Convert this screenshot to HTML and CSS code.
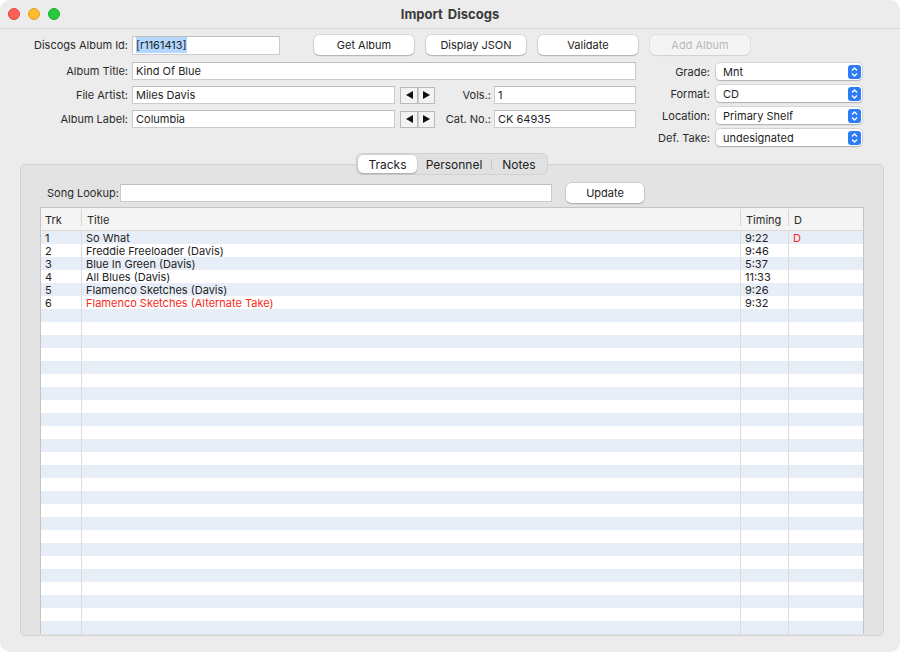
FILE: index.html
```html
<html>
<head>
  <link rel="stylesheet" href="styles.css">
</head>
<body>
<div class="window">
  <div class="titlebar">
    <div class="lights">
      <span class="light light-red"></span>
      <span class="light light-yellow"></span>
      <span class="light light-green"></span>
    </div>
    <div class="title">Import Discogs</div>
    <div></div>
  </div>

  <div class="content">
    <div class="row-id">
      <div class="lbl lbl-main">Discogs Album Id:</div>
      <div class="field field-id"><span class="sel">[r1161413]</span></div>
      <div class="buttons">
        <div class="btn">Get Album</div>
        <div class="btn">Display JSON</div>
        <div class="btn">Validate</div>
        <div class="btn btn-disabled">Add Album</div>
      </div>
    </div>

    <div class="fields">
      <div class="left-form">
        <div class="frow">
          <div class="lbl lbl-main">Album Title:</div>
          <div class="field field-title">Kind Of Blue</div>
        </div>
        <div class="frow">
          <div class="lbl lbl-main">File Artist:</div>
          <div class="field field-artist">Miles Davis</div>
          <div class="arrows">
            <div class="arr"><svg width="7" height="8" viewBox="0 0 7 8"><polygon points="7,0 7,8 0,4" fill="#111"/></svg></div>
            <div class="arr"><svg width="7" height="8" viewBox="0 0 7 8"><polygon points="0,0 0,8 7,4" fill="#111"/></svg></div>
          </div>
          <div class="lbl lbl-mid">Vols.:</div>
          <div class="field field-small">1</div>
        </div>
        <div class="frow">
          <div class="lbl lbl-main">Album Label:</div>
          <div class="field field-artist">Columbia</div>
          <div class="arrows">
            <div class="arr"><svg width="7" height="8" viewBox="0 0 7 8"><polygon points="7,0 7,8 0,4" fill="#111"/></svg></div>
            <div class="arr"><svg width="7" height="8" viewBox="0 0 7 8"><polygon points="0,0 0,8 7,4" fill="#111"/></svg></div>
          </div>
          <div class="lbl lbl-mid">Cat. No.:</div>
          <div class="field field-small">CK 64935</div>
        </div>
      </div>

      <div class="right-form">
        <div class="prow">
          <div class="lbl lbl-right">Grade:</div>
          <div class="popup"><span>Mnt</span>
            <svg class="stepper" width="13" height="14" viewBox="0 0 13 14"><rect width="13" height="14" rx="3" fill="#2d7cf6"/><polyline points="4,5.5 6.5,3 9,5.5" fill="none" stroke="#fff" stroke-width="1.3"/><polyline points="4,8.5 6.5,11 9,8.5" fill="none" stroke="#fff" stroke-width="1.3"/></svg>
          </div>
        </div>
        <div class="prow">
          <div class="lbl lbl-right">Format:</div>
          <div class="popup"><span>CD</span>
            <svg class="stepper" width="13" height="14" viewBox="0 0 13 14"><rect width="13" height="14" rx="3" fill="#2d7cf6"/><polyline points="4,5.5 6.5,3 9,5.5" fill="none" stroke="#fff" stroke-width="1.3"/><polyline points="4,8.5 6.5,11 9,8.5" fill="none" stroke="#fff" stroke-width="1.3"/></svg>
          </div>
        </div>
        <div class="prow">
          <div class="lbl lbl-right">Location:</div>
          <div class="popup"><span>Primary Shelf</span>
            <svg class="stepper" width="13" height="14" viewBox="0 0 13 14"><rect width="13" height="14" rx="3" fill="#2d7cf6"/><polyline points="4,5.5 6.5,3 9,5.5" fill="none" stroke="#fff" stroke-width="1.3"/><polyline points="4,8.5 6.5,11 9,8.5" fill="none" stroke="#fff" stroke-width="1.3"/></svg>
          </div>
        </div>
        <div class="prow">
          <div class="lbl lbl-right">Def. Take:</div>
          <div class="popup"><span>undesignated</span>
            <svg class="stepper" width="13" height="14" viewBox="0 0 13 14"><rect width="13" height="14" rx="3" fill="#2d7cf6"/><polyline points="4,5.5 6.5,3 9,5.5" fill="none" stroke="#fff" stroke-width="1.3"/><polyline points="4,8.5 6.5,11 9,8.5" fill="none" stroke="#fff" stroke-width="1.3"/></svg>
          </div>
        </div>
      </div>
    </div>

    <div class="tabbox">
      <div class="tabs">
        <div class="tab tab-tracks tab-active">Tracks</div>
        <div class="tab tab-personnel">Personnel</div>
        <div class="tab-sep"></div>
        <div class="tab tab-notes">Notes</div>
      </div>

      <div class="lookup">
        <div class="lbl lbl-lookup">Song Lookup:</div>
        <div class="field field-lookup"></div>
        <div class="btn btn-update">Update</div>
      </div>

      <div class="table">
        <div class="thead">
          <div class="th">Trk</div>
          <div class="th">Title</div>
          <div class="th">Timing</div>
          <div class="th">D</div>
        </div>
        <div class="tbody">
          <div class="tr"><div class="td">1</div><div class="td">So What</div><div class="td">9:22</div><div class="td txt-red">D</div></div>
          <div class="tr"><div class="td">2</div><div class="td">Freddie Freeloader (Davis)</div><div class="td">9:46</div><div class="td"></div></div>
          <div class="tr"><div class="td">3</div><div class="td">Blue In Green (Davis)</div><div class="td">5:37</div><div class="td"></div></div>
          <div class="tr"><div class="td">4</div><div class="td">All Blues (Davis)</div><div class="td">11:33</div><div class="td"></div></div>
          <div class="tr"><div class="td">5</div><div class="td">Flamenco Sketches (Davis)</div><div class="td">9:26</div><div class="td"></div></div>
          <div class="tr"><div class="td">6</div><div class="td txt-red">Flamenco Sketches (Alternate Take)</div><div class="td">9:32</div><div class="td"></div></div>
          <div class="tr"><div class="td"></div><div class="td"></div><div class="td"></div><div class="td"></div></div>
          <div class="tr"><div class="td"></div><div class="td"></div><div class="td"></div><div class="td"></div></div>
          <div class="tr"><div class="td"></div><div class="td"></div><div class="td"></div><div class="td"></div></div>
          <div class="tr"><div class="td"></div><div class="td"></div><div class="td"></div><div class="td"></div></div>
          <div class="tr"><div class="td"></div><div class="td"></div><div class="td"></div><div class="td"></div></div>
          <div class="tr"><div class="td"></div><div class="td"></div><div class="td"></div><div class="td"></div></div>
          <div class="tr"><div class="td"></div><div class="td"></div><div class="td"></div><div class="td"></div></div>
          <div class="tr"><div class="td"></div><div class="td"></div><div class="td"></div><div class="td"></div></div>
          <div class="tr"><div class="td"></div><div class="td"></div><div class="td"></div><div class="td"></div></div>
          <div class="tr"><div class="td"></div><div class="td"></div><div class="td"></div><div class="td"></div></div>
          <div class="tr"><div class="td"></div><div class="td"></div><div class="td"></div><div class="td"></div></div>
          <div class="tr"><div class="td"></div><div class="td"></div><div class="td"></div><div class="td"></div></div>
          <div class="tr"><div class="td"></div><div class="td"></div><div class="td"></div><div class="td"></div></div>
          <div class="tr"><div class="td"></div><div class="td"></div><div class="td"></div><div class="td"></div></div>
          <div class="tr"><div class="td"></div><div class="td"></div><div class="td"></div><div class="td"></div></div>
          <div class="tr"><div class="td"></div><div class="td"></div><div class="td"></div><div class="td"></div></div>
          <div class="tr"><div class="td"></div><div class="td"></div><div class="td"></div><div class="td"></div></div>
          <div class="tr"><div class="td"></div><div class="td"></div><div class="td"></div><div class="td"></div></div>
          <div class="tr"><div class="td"></div><div class="td"></div><div class="td"></div><div class="td"></div></div>
          <div class="tr"><div class="td"></div><div class="td"></div><div class="td"></div><div class="td"></div></div>
          <div class="tr"><div class="td"></div><div class="td"></div><div class="td"></div><div class="td"></div></div>
          <div class="tr"><div class="td"></div><div class="td"></div><div class="td"></div><div class="td"></div></div>
          <div class="tr"><div class="td"></div><div class="td"></div><div class="td"></div><div class="td"></div></div>
          <div class="tr"><div class="td"></div><div class="td"></div><div class="td"></div><div class="td"></div></div>
          <div class="tr"><div class="td"></div><div class="td"></div><div class="td"></div><div class="td"></div></div>
        </div>
      </div>
    </div>
  </div>
</div>
</body>
</html>
```

FILE: styles.css
```css
body {
  margin: 0;
  padding: 0;
  background: #fff;
  font-family: Inter, "Noto Sans", sans-serif;
  font-size: 11px;
  color: #262626;
}

.window {
  width: 900px;
  height: 652px;
  background: #ececec;
  border-radius: 10px;
  overflow: hidden;
  display: flex;
  flex-direction: column;
}

/* title bar */

.titlebar {
  height: 28px;
  flex: none;
  border-bottom: 1px solid #d8d8d8;
  display: grid;
  grid-template-columns: 1fr auto 1fr;
  align-items: center;
}

.lights {
  display: flex;
  gap: 8px;
  padding-left: 8px;
}

.light {
  width: 12px;
  height: 12px;
  border-radius: 50%;
  box-sizing: border-box;
}

.light-red { background: #fe5f57; border: 0.5px solid #e2463f; }
.light-yellow { background: #febc2e; border: 0.5px solid #dfa023; }
.light-green { background: #28c840; border: 0.5px solid #1dad2b; }

.title {
  font-size: 13px;
  font-weight: 700;
  color: #3a3a3a;
  word-spacing: 2px;
}

/* form */

.content {
  flex: 1;
  display: flex;
  flex-direction: column;
  padding: 6px 16px 16px 20px;
  min-height: 0;
}

.lbl {
  color: #2b2b2b;
  white-space: nowrap;
}

.lbl-main {
  width: 108px;
  margin-right: 4px;
  text-align: right;
}

.lbl-mid {
  width: 56px;
  margin-right: 3px;
  text-align: right;
}

.lbl-right {
  width: 66px;
  margin-right: 6px;
  text-align: right;
}

.field {
  box-sizing: border-box;
  background: #fff;
  border: 1px solid #cbcbcb;
  border-top-color: #bfbfbf;
  height: 18px;
  padding: 0 3px;
  display: flex;
  align-items: center;
  color: #1e1e1e;
}

.row-id {
  display: flex;
  align-items: center;
  height: 20px;
}

.field-id {
  width: 148px;
  height: 19px;
}

.sel {
  background: #b3d7ff;
  padding: 1px 0;
}

.buttons {
  display: flex;
  gap: 12px;
  margin-left: 34px;
}

.btn {
  box-sizing: border-box;
  width: 100px;
  height: 20px;
  background: #fff;
  border-radius: 5px;
  box-shadow: 0 0 0 0.5px rgba(0,0,0,0.18), 0 1px 1.5px rgba(0,0,0,0.18);
  display: flex;
  align-items: center;
  justify-content: center;
  color: #222;
}

.btn-disabled {
  background: #f4f4f4;
  color: #b9b9b9;
  box-shadow: 0 0 0 0.5px rgba(0,0,0,0.08), 0 0.5px 1px rgba(0,0,0,0.08);
}

.fields {
  display: flex;
  margin-top: 7px;
}

.left-form {
  width: 616px;
  display: flex;
  flex-direction: column;
  gap: 6px;
}

.frow {
  display: flex;
  align-items: center;
  height: 18px;
}

.field-title { width: 504px; }
.field-artist { width: 263px; }
.field-small { width: 142px; }

.arrows {
  display: flex;
  margin-left: 5px;
  height: 17px;
}

.arr {
  box-sizing: border-box;
  width: 18px;
  height: 17px;
  background: #f3f3f3;
  border: 1px solid #b9b9b9;
  display: flex;
  align-items: center;
  justify-content: center;
}

.arr + .arr {
  width: 17px;
  border-left: 1px solid #c9c9c9;
}

.right-form {
  margin-left: 8px;
  margin-top: 1px;
  display: flex;
  flex-direction: column;
  gap: 5px;
}

.prow {
  display: flex;
  align-items: center;
  height: 17px;
}

.popup {
  box-sizing: border-box;
  width: 146px;
  height: 17px;
  background: #fff;
  border-radius: 4px;
  box-shadow: 0 0 0 0.5px rgba(0,0,0,0.2), 0 1px 1.5px rgba(0,0,0,0.18);
  display: flex;
  align-items: center;
  justify-content: space-between;
  padding: 0 1px 0 7px;
  color: #1e1e1e;
}

.stepper {
  display: block;
}

/* tab box */

.tabbox {
  flex: 1;
  min-height: 0;
  margin-top: 18px;
  background: #e3e3e3;
  border: 1px solid #d3d3d3;
  border-radius: 5px;
  display: flex;
  flex-direction: column;
  padding: 0 19px 1px;
}

.tabs {
  align-self: center;
  margin-top: -12px;
  box-sizing: border-box;
  height: 22px;
  display: flex;
  align-items: center;
  padding: 1px;
  background: #e1e1e1;
  border: 1px solid #d1d1d1;
  border-radius: 6px;
  font-size: 12px;
  color: #222;
}

.tab {
  height: 18px;
  display: flex;
  align-items: center;
  justify-content: center;
}

.tab-tracks { width: 59px; }
.tab-personnel { width: 74px; }
.tab-notes { width: 54px; }

.tab-active {
  background: #fff;
  border-radius: 5px;
  box-shadow: 0 0 0 0.5px rgba(0,0,0,0.12), 0 1px 1.5px rgba(0,0,0,0.2);
}

.tab-sep {
  width: 1px;
  height: 11px;
  background: #c6c6c6;
}

.lookup {
  display: flex;
  align-items: center;
  height: 20px;
  margin-top: 8px;
}

.lbl-lookup {
  width: 71px;
  margin-left: 7px;
  margin-right: 2px;
  text-align: right;
}

.field-lookup {
  width: 432px;
  height: 18px;
}

.btn-update {
  width: 78px;
  margin-left: 14px;
}

/* table */

.table {
  flex: 1;
  min-height: 0;
  margin-top: 4px;
  background: #fff;
  border: 1px solid #c4c4c4;
  border-bottom: none;
  display: flex;
  flex-direction: column;
  overflow: hidden;
}

.thead {
  flex: none;
  box-sizing: border-box;
  height: 23px;
  padding-top: 1px;
  background: #f4f4f4;
  border-bottom: 1px solid #dadada;
  display: grid;
  grid-template-columns: 40px 659px 48px 75px;
  align-items: center;
}

.th {
  position: relative;
  padding-left: 4px;
  color: #2a2a2a;
}

.th + .th {
  padding-left: 6px;
}

.th + .th::before {
  content: "";
  position: absolute;
  left: 0;
  top: -4px;
  width: 1px;
  height: 17px;
  background: #d6d6d6;
}

.tbody {
  flex: 1;
  min-height: 0;
  overflow: hidden;
}

.tr {
  display: grid;
  grid-template-columns: 40px 659px 48px 75px;
  height: 13px;
}

.tr:nth-child(odd) {
  background: #e8eef7;
}

.td {
  box-sizing: border-box;
  height: 13px;
  padding: 1px 0 0 4px;
  line-height: 12px;
  white-space: nowrap;
  color: #222;
}

.td + .td {
  border-left: 1px solid #dcdcdc;
}

.txt-red {
  color: #f62b1b;
}
```
